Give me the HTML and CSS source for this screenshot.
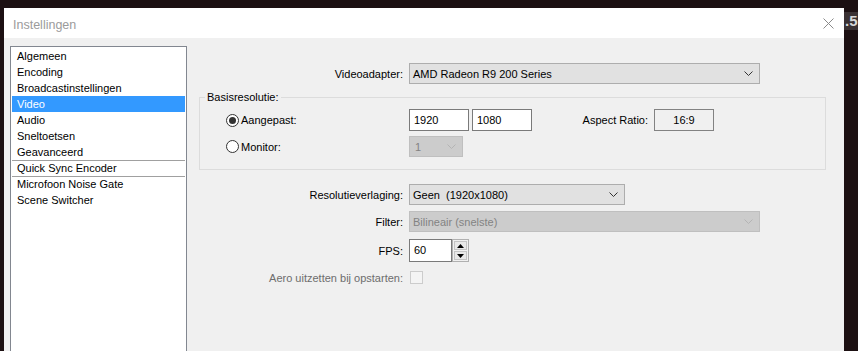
FILE: index.html
```html
<!DOCTYPE html>
<html lang="nl">
<head>
    <meta charset="UTF-8">
    <meta name="viewport" content="width=device-width, initial-scale=1.0">
    <title>Instellingen</title>
    <link rel="stylesheet" href="styles.css">
</head>
<body>
    <div id="desktop">
        <div class="window">
            <div class="titlebar">
                <span class="title">Instellingen</span>
                <svg class="close" width="11" height="11" viewBox="0 0 11 11">
                    <path d="M0.5 0.5 L10.5 10.5 M10.5 0.5 L0.5 10.5" stroke="#8a8a8a" stroke-width="1" fill="none"/>
                </svg>
            </div>
            <div class="content">
                <ul class="pages">
                    <li>Algemeen</li>
                    <li>Encoding</li>
                    <li>Broadcastinstellingen</li>
                    <li class="selected">Video</li>
                    <li>Audio</li>
                    <li>Sneltoetsen</li>
                    <li>Geavanceerd</li>
                    <li class="plugin first">Quick Sync Encoder</li>
                    <li class="plugin">Microfoon Noise Gate</li>
                    <li>Scene Switcher</li>
                </ul>
                <div class="panel">
                    <div class="row">
                        <label class="label">Videoadapter:</label>
                        <div class="combo wide">
                            <span>AMD Radeon R9 200 Series</span>
                            <svg class="chev" width="9" height="5" viewBox="0 0 9 5"><path d="M0.5 0.5 L4.5 4.5 L8.5 0.5" stroke="#333" fill="none"/></svg>
                        </div>
                    </div>

                    <fieldset class="group">
                        <legend>Basisresolutie:</legend>
                        <div class="group-row first">
                            <div class="radio-wrap"><span class="radio checked"></span>Aangepast:</div>
                            <div class="field">1920</div>
                            <div class="field second">1080</div>
                            <span class="aspect-label">Aspect Ratio:</span>
                            <div class="aspect">16:9</div>
                        </div>
                        <div class="group-row">
                            <div class="radio-wrap"><span class="radio"></span>Monitor:</div>
                            <div class="combo small disabled">
                                <span>1</span>
                                <svg class="chev" width="9" height="5" viewBox="0 0 9 5"><path d="M0.5 0.5 L4.5 4.5 L8.5 0.5" stroke="#b4b4b4" fill="none"/></svg>
                            </div>
                        </div>
                    </fieldset>

                    <div class="row downscale">
                        <label class="label">Resolutieverlaging:</label>
                        <div class="combo medium">
                            <span>Geen&nbsp;&nbsp;(1920x1080)</span>
                            <svg class="chev" width="9" height="5" viewBox="0 0 9 5"><path d="M0.5 0.5 L4.5 4.5 L8.5 0.5" stroke="#333" fill="none"/></svg>
                        </div>
                    </div>
                    <div class="row filter">
                        <label class="label">Filter:</label>
                        <div class="combo wide disabled">
                            <span>Bilineair (snelste)</span>
                            <svg class="chev" width="9" height="5" viewBox="0 0 9 5"><path d="M0.5 0.5 L4.5 4.5 L8.5 0.5" stroke="#b4b4b4" fill="none"/></svg>
                        </div>
                    </div>
                    <div class="row fps">
                        <label class="label">FPS:</label>
                        <div class="spin">
                            <div class="spin-value">60</div>
                            <div class="spin-buttons">
                                <div class="spin-btn"><svg width="7" height="4" viewBox="0 0 7 4"><path d="M3.5 0 L7 4 L0 4 Z" fill="#000"/></svg></div>
                                <div class="spin-btn"><svg width="7" height="4" viewBox="0 0 7 4"><path d="M0 0 L7 0 L3.5 4 Z" fill="#000"/></svg></div>
                            </div>
                        </div>
                    </div>
                    <div class="row aero">
                        <label class="label muted">Aero uitzetten bij opstarten:</label>
                        <span class="checkbox"></span>
                    </div>
                </div>
            </div>
        </div>
        <div class="side"><span class="bg-text">.5</span></div>
    </div>
</body>
</html>
```

FILE: styles.css
```css
* {
    margin: 0;
    padding: 0;
    box-sizing: border-box;
}
body {
    background-color: #1c1012;
    font-family: "Liberation Sans", Arial, sans-serif;
    font-size: 11px;
    color: #000;
    overflow: hidden;
}
#desktop {
    display: flex;
    height: 351px;
}
.window {
    width: 840px;
    height: 343px;
    margin: 8px 0 0 4px;
    background-color: #f0f0f0;
    display: flex;
    flex-direction: column;
    overflow: hidden;
}
.titlebar {
    flex-shrink: 0;
    height: 30px;
    background-color: #fff;
    display: flex;
    align-items: center;
    justify-content: space-between;
    padding: 3px 10px 0 9px;
}
.title {
    font-size: 12.5px;
    color: #9b9b9b;
}
.close {
    margin-top: -2px;
}
.content {
    display: flex;
    padding: 8px 0 0 6px;
    flex: 1;
    min-height: 0;
}

/* page list */
.pages {
    list-style: none;
    width: 177px;
    height: 320px;
    flex-shrink: 0;
    border: 1px solid #828790;
    background-color: #fff;
    padding: 1px;
}
.pages li {
    height: 16px;
    line-height: 16px;
    padding-left: 5px;
    white-space: nowrap;
}
.pages li.selected {
    background-color: #3399ff;
    color: #fff;
}
.pages li.plugin {
    border-top: 1px solid #a0a0a0;
    line-height: 15px;
}

/* settings panel */
.panel {
    padding: 17px 0 0 12px;
    width: 639px;
}
.row {
    display: grid;
    grid-template-columns: 204px auto;
    column-gap: 6px;
    align-items: center;
    justify-items: start;
}
.label {
    justify-self: end;
    white-space: nowrap;
}
.label.muted {
    color: #6d6d6d;
}
.combo {
    height: 21px;
    background-color: #e1e1e1;
    border: 1px solid #adadad;
    display: flex;
    align-items: center;
    justify-content: space-between;
    padding: 0 6px 0 3px;
    white-space: nowrap;
}
.combo.wide { width: 351px; }
.combo.medium { width: 216px; }
.combo.small { width: 54px; }
.combo.disabled {
    background-color: #cccccc;
    border-color: #bfbfbf;
    color: #838383;
}
.combo.small span { padding-left: 2px; }

.group {
    width: 627px;
    margin-top: 6px;
    border: 1px solid #dcdcdc;
    padding: 0 0 12px 0;
}
.group legend {
    margin-left: 5px;
    padding: 0 2px;
    line-height: 14px;
}
.group-row {
    display: flex;
    align-items: center;
    margin: 5px 0 0 26px;
}
.radio-wrap {
    width: 183px;
    display: flex;
    align-items: center;
}
.radio {
    width: 13px;
    height: 13px;
    border: 1px solid #333;
    border-radius: 50%;
    background-color: #fff;
    margin-right: 2px;
    display: flex;
    align-items: center;
    justify-content: center;
}
.radio.checked::after {
    content: "";
    width: 7px;
    height: 7px;
    border-radius: 50%;
    background-color: #333;
}
.field {
    width: 60px;
    height: 22px;
    line-height: 20px;
    background-color: #fff;
    border: 1px solid #7a7a7a;
    padding-left: 4px;
}
.field.second {
    margin-left: 3px;
}
.aspect-label {
    width: 116px;
    text-align: right;
}
.aspect {
    width: 60px;
    height: 22px;
    line-height: 20px;
    margin-left: 6px;
    border: 1px solid #828282;
    text-align: center;
}

.downscale { margin-top: 14px; }
.filter { margin-top: 6px; }
.fps { margin-top: 7px; }
.aero { margin-top: 9px; }

.spin {
    display: flex;
    height: 23px;
    width: 60px;
}
.spin-value {
    width: 43px;
    border: 1px solid #7a7a7a;
    background-color: #fff;
    padding-left: 4px;
    line-height: 20px;
}
.spin-buttons {
    width: 17px;
    border: 1px solid #b0b0b0;
    display: flex;
    flex-direction: column;
    gap: 1px;
    padding: 1px;
    background-color: #f0f0f0;
}
.spin-btn {
    flex: 1;
    background-color: #e8e8e8;
    border: 1px solid #c4c4c4;
    display: flex;
    align-items: center;
    justify-content: center;
}
.checkbox {
    width: 13px;
    height: 13px;
    border: 1px solid #cccccc;
    background-color: #f4f4f4;
    margin-left: 1px;
}

.side {
    flex: 1;
    overflow: hidden;
    padding-top: 12px;
}
.bg-text {
    display: inline-block;
    background-color: #3a3133;
    color: #d6d6d6;
    font-size: 15px;
    font-weight: bold;
    line-height: 18px;
    padding-left: 1px;
}
```
